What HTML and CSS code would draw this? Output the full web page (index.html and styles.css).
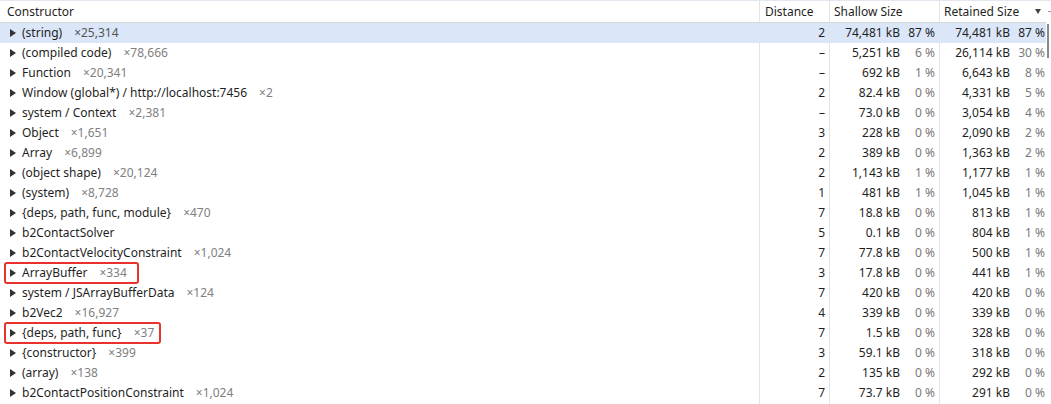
FILE: index.html
```html
<!DOCTYPE html>
<html>
<head>
<meta charset="utf-8">
<link rel="stylesheet" href="styles.css">
</head>
<body>
<div class="panel">
  <div class="grid">
    <div class="row head">
      <div class="c name">Constructor</div>
      <div class="c dist">Distance</div>
      <div class="c size">Shallow Size</div>
      <div class="c size ret">Retained Size<span class="sort"></span></div>
    </div>
    <div class="row sel">
      <div class="c name"><span class="tri"></span><span class="nm">(string)</span><span class="cnt">×25,314</span></div>
      <div class="c dist">2</div>
      <div class="c size"><span class="v">74,481 kB</span><span class="p">87 %</span></div>
      <div class="c size ret"><span class="v">74,481 kB</span><span class="p">87 %</span></div>
    </div>
    <div class="row">
      <div class="c name"><span class="tri"></span><span class="nm">(compiled code)</span><span class="cnt">×78,666</span></div>
      <div class="c dist">–</div>
      <div class="c size"><span class="v">5,251 kB</span><span class="p">6 %</span></div>
      <div class="c size ret"><span class="v">26,114 kB</span><span class="p">30 %</span></div>
    </div>
    <div class="row">
      <div class="c name"><span class="tri"></span><span class="nm">Function</span><span class="cnt">×20,341</span></div>
      <div class="c dist">–</div>
      <div class="c size"><span class="v">692 kB</span><span class="p">1 %</span></div>
      <div class="c size ret"><span class="v">6,643 kB</span><span class="p">8 %</span></div>
    </div>
    <div class="row">
      <div class="c name"><span class="tri"></span><span class="nm">Window (global*) / http://localhost:7456</span><span class="cnt">×2</span></div>
      <div class="c dist">2</div>
      <div class="c size"><span class="v">82.4 kB</span><span class="p">0 %</span></div>
      <div class="c size ret"><span class="v">4,331 kB</span><span class="p">5 %</span></div>
    </div>
    <div class="row">
      <div class="c name"><span class="tri"></span><span class="nm">system / Context</span><span class="cnt">×2,381</span></div>
      <div class="c dist">–</div>
      <div class="c size"><span class="v">73.0 kB</span><span class="p">0 %</span></div>
      <div class="c size ret"><span class="v">3,054 kB</span><span class="p">4 %</span></div>
    </div>
    <div class="row">
      <div class="c name"><span class="tri"></span><span class="nm">Object</span><span class="cnt">×1,651</span></div>
      <div class="c dist">3</div>
      <div class="c size"><span class="v">228 kB</span><span class="p">0 %</span></div>
      <div class="c size ret"><span class="v">2,090 kB</span><span class="p">2 %</span></div>
    </div>
    <div class="row">
      <div class="c name"><span class="tri"></span><span class="nm">Array</span><span class="cnt">×6,899</span></div>
      <div class="c dist">2</div>
      <div class="c size"><span class="v">389 kB</span><span class="p">0 %</span></div>
      <div class="c size ret"><span class="v">1,363 kB</span><span class="p">2 %</span></div>
    </div>
    <div class="row">
      <div class="c name"><span class="tri"></span><span class="nm">(object shape)</span><span class="cnt">×20,124</span></div>
      <div class="c dist">2</div>
      <div class="c size"><span class="v">1,143 kB</span><span class="p">1 %</span></div>
      <div class="c size ret"><span class="v">1,177 kB</span><span class="p">1 %</span></div>
    </div>
    <div class="row">
      <div class="c name"><span class="tri"></span><span class="nm">(system)</span><span class="cnt">×8,728</span></div>
      <div class="c dist">1</div>
      <div class="c size"><span class="v">481 kB</span><span class="p">1 %</span></div>
      <div class="c size ret"><span class="v">1,045 kB</span><span class="p">1 %</span></div>
    </div>
    <div class="row">
      <div class="c name"><span class="tri"></span><span class="nm">{deps, path, func, module}</span><span class="cnt">×470</span></div>
      <div class="c dist">7</div>
      <div class="c size"><span class="v">18.8 kB</span><span class="p">0 %</span></div>
      <div class="c size ret"><span class="v">813 kB</span><span class="p">1 %</span></div>
    </div>
    <div class="row">
      <div class="c name"><span class="tri"></span><span class="nm">b2ContactSolver</span></div>
      <div class="c dist">5</div>
      <div class="c size"><span class="v">0.1 kB</span><span class="p">0 %</span></div>
      <div class="c size ret"><span class="v">804 kB</span><span class="p">1 %</span></div>
    </div>
    <div class="row">
      <div class="c name"><span class="tri"></span><span class="nm">b2ContactVelocityConstraint</span><span class="cnt">×1,024</span></div>
      <div class="c dist">7</div>
      <div class="c size"><span class="v">77.8 kB</span><span class="p">0 %</span></div>
      <div class="c size ret"><span class="v">500 kB</span><span class="p">1 %</span></div>
    </div>
    <div class="row">
      <div class="c name"><span class="mark mark1"><span class="tri"></span><span class="nm">ArrayBuffer</span><span class="cnt">×334</span></span></div>
      <div class="c dist">3</div>
      <div class="c size"><span class="v">17.8 kB</span><span class="p">0 %</span></div>
      <div class="c size ret"><span class="v">441 kB</span><span class="p">1 %</span></div>
    </div>
    <div class="row">
      <div class="c name"><span class="tri"></span><span class="nm">system / JSArrayBufferData</span><span class="cnt">×124</span></div>
      <div class="c dist">7</div>
      <div class="c size"><span class="v">420 kB</span><span class="p">0 %</span></div>
      <div class="c size ret"><span class="v">420 kB</span><span class="p">0 %</span></div>
    </div>
    <div class="row">
      <div class="c name"><span class="tri"></span><span class="nm">b2Vec2</span><span class="cnt">×16,927</span></div>
      <div class="c dist">4</div>
      <div class="c size"><span class="v">339 kB</span><span class="p">0 %</span></div>
      <div class="c size ret"><span class="v">339 kB</span><span class="p">0 %</span></div>
    </div>
    <div class="row">
      <div class="c name"><span class="mark mark2"><span class="tri"></span><span class="nm">{deps, path, func}</span><span class="cnt">×37</span></span></div>
      <div class="c dist">7</div>
      <div class="c size"><span class="v">1.5 kB</span><span class="p">0 %</span></div>
      <div class="c size ret"><span class="v">328 kB</span><span class="p">0 %</span></div>
    </div>
    <div class="row">
      <div class="c name"><span class="tri"></span><span class="nm">{constructor}</span><span class="cnt">×399</span></div>
      <div class="c dist">3</div>
      <div class="c size"><span class="v">59.1 kB</span><span class="p">0 %</span></div>
      <div class="c size ret"><span class="v">318 kB</span><span class="p">0 %</span></div>
    </div>
    <div class="row">
      <div class="c name"><span class="tri"></span><span class="nm">(array)</span><span class="cnt">×138</span></div>
      <div class="c dist">2</div>
      <div class="c size"><span class="v">135 kB</span><span class="p">0 %</span></div>
      <div class="c size ret"><span class="v">292 kB</span><span class="p">0 %</span></div>
    </div>
    <div class="row">
      <div class="c name"><span class="tri"></span><span class="nm">b2ContactPositionConstraint</span><span class="cnt">×1,024</span></div>
      <div class="c dist">7</div>
      <div class="c size"><span class="v">73.7 kB</span><span class="p">0 %</span></div>
      <div class="c size ret"><span class="v">291 kB</span><span class="p">0 %</span></div>
    </div>
    <div class="row">
      <div class="c name"></div>
      <div class="c dist"></div>
      <div class="c size"></div>
      <div class="c size ret"></div>
    </div>
  </div>
  <div class="scroll"><div class="dash"></div><div class="thumb"></div></div>
</div>
</body>
</html>
```
FILE: styles.css
```css
html, body {
  margin: 0;
  padding: 0;
  background: #fff;
}
body {
  width: 1051px;
  height: 404px;
  overflow: hidden;
  font-family: "Noto Sans", "Liberation Sans", sans-serif;
  font-size: 12px;
  color: #1f1f1f;
}
.panel {
  display: flex;
  height: 404px;
  border-top: 1px solid #e3e8f0;
  box-sizing: border-box;
}
.grid {
  width: 1046px;
  display: flex;
  flex-direction: column;
}
.row {
  display: grid;
  grid-template-columns: 759px 70px 110px 107px;
  height: 20px;
  line-height: 20px;
  flex: none;
}
.row.head {
  height: 21px;
  line-height: 21px;
  border-bottom: 1px solid #d6d6d6;
  background: #fff;
}
.row.sel {
  background: #dbe6f9;
}
.c {
  white-space: nowrap;
  overflow: hidden;
  box-sizing: border-box;
}
.dist, .size {
  border-left: 1px solid #e4e4e4;
}
.name {
  padding-left: 10px;
  display: flex;
  align-items: center;
  overflow: visible;
}
.head .name {
  padding-left: 7px;
}
.dist {
  text-align: right;
  padding-right: 4px;
}
.head .dist {
  text-align: left;
  padding-left: 5px;
}
.size {
  display: flex;
  justify-content: flex-end;
  padding-right: 4px;
}
.size.ret {
  padding-right: 1px;
}
.head .size {
  justify-content: flex-start;
  align-items: center;
  padding-left: 4px;
}
.sort {
  width: 0;
  height: 0;
  border-left: 3.5px solid transparent;
  border-right: 3.5px solid transparent;
  border-top: 5px solid #444;
  margin-left: 16px;
  margin-top: -1px;
  flex: none;
}
.p {
  width: 35px;
  text-align: right;
  color: #7a7a7a;
}
.sel .p {
  color: #1f1f1f;
}
.tri {
  width: 0;
  height: 0;
  border-top: 4px solid transparent;
  border-bottom: 4px solid transparent;
  border-left: 6px solid #333;
  margin-right: 6px;
  flex: none;
}
.cnt {
  margin-left: 12px;
  color: #808080;
}
.sel .cnt {
  color: #555;
}
.mark {
  display: flex;
  align-items: center;
  align-self: stretch;
  position: relative;
}
.mark::after {
  content: "";
  position: absolute;
  left: -6px;
  top: -1px;
  bottom: -1px;
  right: -12px;
  border: 2px solid #e8322b;
  border-radius: 3px;
}
.mark2::after {
  right: -7px;
}
.scroll {
  width: 5px;
  display: flex;
  flex-direction: column;
}
.dash {
  margin-top: 10px;
  width: 3px;
  height: 1px;
  background: #999;
  margin-left: 2px;
}
.thumb {
  margin-top: 12px;
  width: 2px;
  height: 34px;
  background: #8a8a8a;
  margin-left: 1px;
}
```
